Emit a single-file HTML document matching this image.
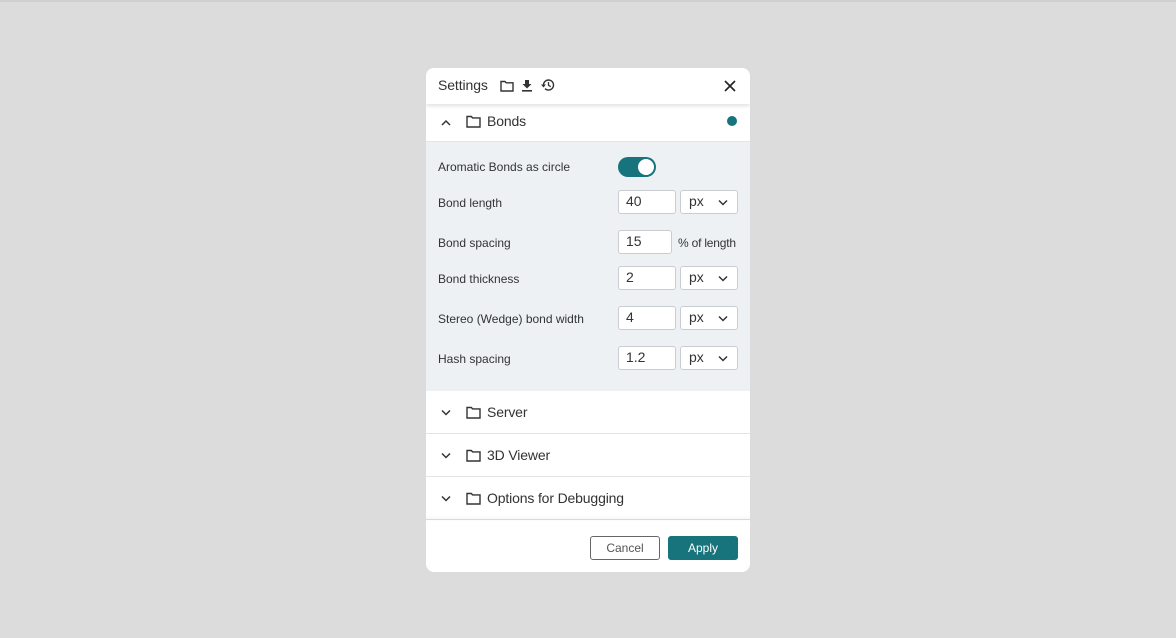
<!DOCTYPE html>
<html><head><style>
*{box-sizing:border-box;margin:0;padding:0}
body{width:1176px;height:638px;background:#dcdcdc;font-family:"Liberation Sans",sans-serif;color:#333;position:relative;overflow:hidden}
.topbar{position:absolute;left:0;top:0;width:1176px;height:2px;background:#cfcfcf}
.dlg{position:absolute;left:426px;top:68px;width:324px;height:504px;background:#fff;border-radius:8px;overflow:hidden}
.hdr{position:absolute;left:0;top:0;width:324px;height:36px;box-shadow:0 2px 4px rgba(0,0,0,.12);z-index:2;background:#fff}
.hdr .t{position:absolute;left:12px;top:9px;font-size:14px;color:#333;letter-spacing:-0.1px}
.abs{position:absolute}
.row{position:absolute;left:0;width:324px;background:#fff;border-bottom:1px solid #e2e4e6}
.row .lbl{position:absolute;left:61px;font-size:14px;color:#333;letter-spacing:-0.15px}
.panel{position:absolute;left:0;top:74px;width:324px;height:249px;background:#edf1f4}
.pl{position:absolute;left:12px;font-size:12px;color:#333}
.inp{position:absolute;left:192px;width:58px;height:24px;background:#fff;border:1px solid #c9ccd0;border-radius:3px;font-size:14px;padding:2px 0 0 7px;color:#333}
.sel{position:absolute;left:254px;width:58px;height:24px;background:#fff;border:1px solid #c9ccd0;border-radius:3px;font-size:14px;padding:2px 0 0 8px;color:#333}
.sel svg{position:absolute;right:9px;top:8px}
.btn{position:absolute;top:468px;height:24px;border-radius:3px;font-size:12px;text-align:center;line-height:22px}
</style></head><body>
<div class="topbar"></div>
<div class="dlg">
 <div class="hdr">
  <div class="t">Settings</div>
  <svg class="abs" style="left:74px;top:12px" width="14" height="12" viewBox="0 0 14 12"><path d="M1 1.5h4l1.2 1.3H13V11H1z" fill="none" stroke="#333" stroke-width="1.4"/></svg>
  <svg class="abs" style="left:95px;top:11px" width="12" height="13" viewBox="0 0 12 13"><path d="M4 1h4v4h2.5L6 9.5 1.5 5H4z" fill="#333"/><rect x="1" y="11" width="10" height="1.6" fill="#333"/></svg>
  <svg class="abs" style="left:114px;top:10px" width="15" height="14" viewBox="0 0 15 14"><path d="M3.5 7A5 5 0 1 1 5 10.6" fill="none" stroke="#333" stroke-width="1.4"/><path d="M1 6.5h5L3.5 9.5z" fill="#333"/><path d="M8.5 4v3.3l2.2 1.4" fill="none" stroke="#333" stroke-width="1.3"/></svg>
  <svg class="abs" style="left:298px;top:12px" width="12" height="12" viewBox="0 0 12 12"><path d="M1 1l10 10M11 1L1 11" stroke="#222" stroke-width="1.6"/></svg>
 </div>
 <div class="row" style="top:36px;height:38px">
  <svg class="abs" style="left:15px;top:15px" width="10" height="7" viewBox="0 0 10 7"><path d="M1 6l4-4 4 4" fill="none" stroke="#333" stroke-width="1.5"/></svg>
  <svg class="abs" style="left:40px;top:11px" width="15" height="13" viewBox="0 0 15 13"><path d="M1 1.5h4.3l1.3 1.4H14V12H1z" fill="none" stroke="#333" stroke-width="1.4"/></svg>
  <div class="lbl" style="top:9px">Bonds</div>
  <div class="abs" style="left:301px;top:12px;width:10px;height:10px;border-radius:50%;background:#17737c"></div>
 </div>
 <div class="panel">
  <div class="pl" style="top:18px">Aromatic Bonds as circle</div>
  <div class="abs" style="left:192px;top:15px;width:38px;height:20px;border-radius:10px;background:#17737c"><div class="abs" style="left:20px;top:2px;width:16px;height:16px;border-radius:50%;background:#fff"></div></div>
  <div class="pl" style="top:54px">Bond length</div>
  <div class="inp" style="top:48px">40</div>
  <div class="sel" style="top:48px">px<svg width="10" height="7" viewBox="0 0 10 7"><path d="M1 1.5l4 4 4-4" fill="none" stroke="#333" stroke-width="1.5"/></svg></div>
  <div class="pl" style="top:94px">Bond spacing</div>
  <div class="inp" style="top:88px;width:54px">15</div>
  <div class="abs" style="left:252px;top:94px;font-size:12px;color:#333;letter-spacing:-0.2px">% of length</div>
  <div class="pl" style="top:130px">Bond thickness</div>
  <div class="inp" style="top:124px">2</div>
  <div class="sel" style="top:124px">px<svg width="10" height="7" viewBox="0 0 10 7"><path d="M1 1.5l4 4 4-4" fill="none" stroke="#333" stroke-width="1.5"/></svg></div>
  <div class="pl" style="top:170px">Stereo (Wedge) bond width</div>
  <div class="inp" style="top:164px">4</div>
  <div class="sel" style="top:164px">px<svg width="10" height="7" viewBox="0 0 10 7"><path d="M1 1.5l4 4 4-4" fill="none" stroke="#333" stroke-width="1.5"/></svg></div>
  <div class="pl" style="top:210px">Hash spacing</div>
  <div class="inp" style="top:204px">1.2</div>
  <div class="sel" style="top:204px">px<svg width="10" height="7" viewBox="0 0 10 7"><path d="M1 1.5l4 4 4-4" fill="none" stroke="#333" stroke-width="1.5"/></svg></div>
 </div>
 <div class="row" style="top:323px;height:43px">
  <svg class="abs" style="left:15px;top:18px" width="10" height="7" viewBox="0 0 10 7"><path d="M1 1.5l4 4 4-4" fill="none" stroke="#333" stroke-width="1.5"/></svg>
  <svg class="abs" style="left:40px;top:15px" width="15" height="13" viewBox="0 0 15 13"><path d="M1 1.5h4.3l1.3 1.4H14V12H1z" fill="none" stroke="#333" stroke-width="1.4"/></svg>
  <div class="lbl" style="top:13px">Server</div>
 </div>
 <div class="row" style="top:366px;height:43px">
  <svg class="abs" style="left:15px;top:18px" width="10" height="7" viewBox="0 0 10 7"><path d="M1 1.5l4 4 4-4" fill="none" stroke="#333" stroke-width="1.5"/></svg>
  <svg class="abs" style="left:40px;top:15px" width="15" height="13" viewBox="0 0 15 13"><path d="M1 1.5h4.3l1.3 1.4H14V12H1z" fill="none" stroke="#333" stroke-width="1.4"/></svg>
  <div class="lbl" style="top:13px">3D Viewer</div>
 </div>
 <div class="row" style="top:409px;height:43px;border-bottom:none">
  <svg class="abs" style="left:15px;top:18px" width="10" height="7" viewBox="0 0 10 7"><path d="M1 1.5l4 4 4-4" fill="none" stroke="#333" stroke-width="1.5"/></svg>
  <svg class="abs" style="left:40px;top:15px" width="15" height="13" viewBox="0 0 15 13"><path d="M1 1.5h4.3l1.3 1.4H14V12H1z" fill="none" stroke="#333" stroke-width="1.4"/></svg>
  <div class="lbl" style="top:13px">Options for Debugging</div>
 </div>
 <div class="abs" style="left:0;top:451px;width:324px;height:1px;background:#d8dadc;box-shadow:0 -1px 3px rgba(0,0,0,.12)"></div>
 <div class="btn" style="left:164px;width:70px;border:1px solid #666;color:#555">Cancel</div>
 <div class="btn" style="left:242px;width:70px;background:#17737c;color:#fff;border:1px solid #17737c">Apply</div>
</div>
</body></html>
